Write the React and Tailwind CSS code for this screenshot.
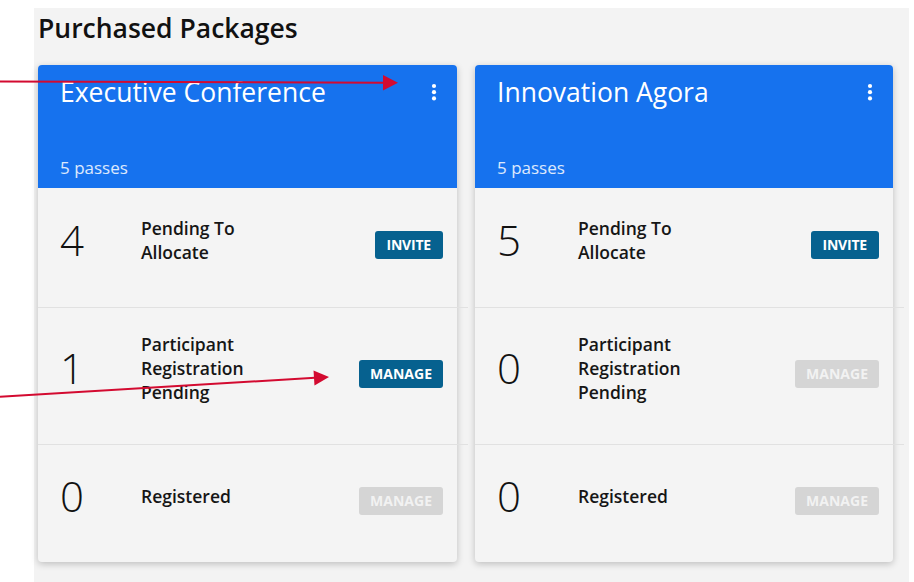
import React from "react";

const packages = [
  {
    name: "Executive Conference",
    passes: "5 passes",
    rows: [
      { count: 4, label: "Pending To Allocate", action: "INVITE", enabled: true, h: "h-[119px]" },
      { count: 1, label: "Participant Registration Pending", action: "MANAGE", enabled: true, h: "h-[136px]" },
      { count: 0, label: "Registered", action: "MANAGE", enabled: false, h: "h-[117px]" },
    ],
  },
  {
    name: "Innovation Agora",
    passes: "5 passes",
    rows: [
      { count: 5, label: "Pending To Allocate", action: "INVITE", enabled: true, h: "h-[119px]" },
      { count: 0, label: "Participant Registration Pending", action: "MANAGE", enabled: false, h: "h-[136px]" },
      { count: 0, label: "Registered", action: "MANAGE", enabled: false, h: "h-[117px]" },
    ],
  },
];

function Kebab() {
  return (
    <svg width="6" height="18" viewBox="0 0 6 18" className="shrink-0 mt-[9px]">
      <circle cx="3" cy="3" r="2.1" fill="white" />
      <circle cx="3" cy="9.2" r="2.1" fill="white" />
      <circle cx="3" cy="15.4" r="2.1" fill="white" />
    </svg>
  );
}

function Row({ row, last }) {
  return (
    <>
      <div className={`${row.h} flex items-center pl-[22px] pr-[14px] pb-[16px]`}>
        <div className="w-[81px] text-[42px] leading-none font-light text-[#111]">{row.count}</div>
        <div className="w-[130px] text-[17.5px] leading-[24px] font-semibold text-[#161616]">{row.label}</div>
        <button
          className={`ml-auto mt-[11px] h-[28px] px-[11px] rounded-[3px] text-[14px] font-bold leading-[28px] ${
            row.action === "INVITE" ? "px-[12px] tracking-[-0.2px]" : ""
          } ${row.enabled ? "bg-[#06618f] text-white" : "bg-[#d5d5d5] text-[#f2f2f2]"}`}
        >
          {row.action}
        </button>
      </div>
      {!last && <div className="h-px w-[calc(100%+11px)] bg-[#e1e1e1]" />}
    </>
  );
}

function Card({ pkg, width }) {
  return (
    <div className={`${width} rounded-[4px] bg-[#f4f4f4] shadow-[0_2px_7px_rgba(0,0,0,0.22)]`}>
      <div className="h-[123px] rounded-t-[4px] bg-[#1672ee] pl-[22px] pr-[20px] pt-[9px] pb-[8px] flex flex-col justify-between">
        <div className="flex items-start justify-between">
          <div className="text-[26.5px] leading-[36px] text-white">{pkg.name}</div>
          <Kebab />
        </div>
        <div className="text-[17px] leading-[24px] text-white/85">{pkg.passes}</div>
      </div>
      {pkg.rows.map((row, i) => (
        <Row key={i} row={row} last={i === pkg.rows.length - 1} />
      ))}
    </div>
  );
}

export default function App() {
  return (
    <div className="relative h-[582px] w-[914px] overflow-hidden bg-white font-['Open_Sans',sans-serif]">
      <div className="ml-[34px] mt-[8px] h-[574px] w-[875px] bg-[#f3f3f3] pl-[4px] pt-[2px]">
        <h1 className="text-[26.5px] leading-[36px] font-semibold text-[#111]">Purchased Packages</h1>
        <div className="mt-[19px] flex gap-[18px]">
          <Card pkg={packages[0]} width="w-[419px]" />
          <Card pkg={packages[1]} width="w-[418px]" />
        </div>
      </div>
      <svg className="pointer-events-none absolute inset-0" width="914" height="582" viewBox="0 0 914 582">
        <line x1="0" y1="81.5" x2="385" y2="82.8" stroke="#d30a30" strokeWidth="2" />
        <polygon points="383,75 398,82.8 383,90.5" fill="#d30a30" />
        <line x1="0" y1="396.7" x2="315" y2="377.8" stroke="#d30a30" strokeWidth="2" />
        <polygon points="313.5,370.4 329,377 314.5,385.4" fill="#d30a30" />
      </svg>
    </div>
  );
}
